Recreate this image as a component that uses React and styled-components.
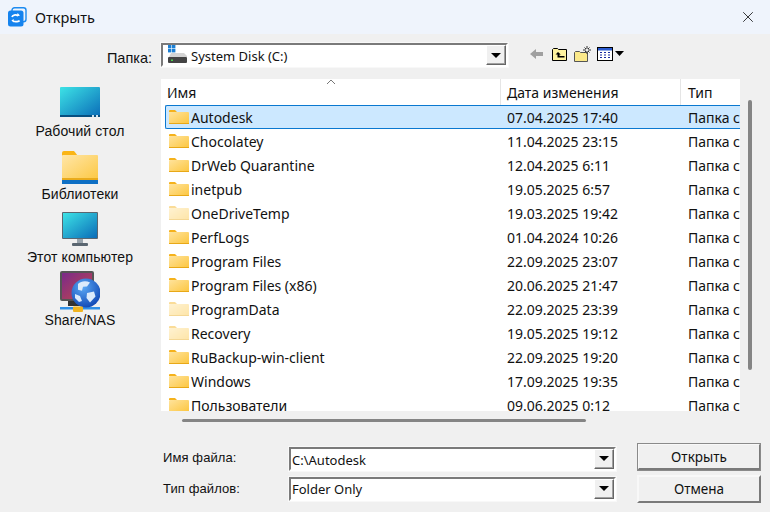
import React, { useId } from "react"
import styled, { createGlobalStyle } from "styled-components"
import { X } from "lucide-react"

const Global = createGlobalStyle`
  html, body { margin: 0; padding: 0; background: #f0f0f0; }
  * { box-sizing: border-box; }
`

const Win = styled.div`
  width: 770px;
  height: 512px;
  overflow: hidden;
  display: flex;
  flex-direction: column;
  background: #f0f0f0;
  color: #111;
  font-family: "Noto Sans", "Open Sans", sans-serif;
`

const TitleBar = styled.div`
  height: 34px;
  flex: none;
  display: flex;
  align-items: center;
  padding: 0 13px 0 8px;
  gap: 8px;
  background: #eff4fc;
  font-size: 14.5px;
`

const TitleText = styled.div`
  flex: 1;
`

const PathRow = styled.div`
  height: 45px;
  flex: none;
  display: flex;
  align-items: flex-start;
  padding-top: 9px;
`

const PathLabel = styled.div`
  width: 152px;
  height: 24px;
  text-align: right;
  font: 14.5px/30px "Liberation Sans", sans-serif;
  margin-right: 9px;
`

const Combo = styled.div`
  width: ${p => p.$w}px;
  height: 24px;
  display: flex;
  align-items: center;
  background: #fff;
  border: 2px solid;
  border-color: #7a7a7a #fff #fff #7a7a7a;
  font: 13px "Noto Sans", sans-serif;
  padding-left: ${p => p.$pad || 0}px;
  outline: 1px solid #f8f8f8;
`

const ComboText = styled.div`
  flex: 1;
  white-space: nowrap;
  margin-left: ${p => p.$left || 0}px;
  padding-top: ${p => p.$drop || 0}px;
`

const ComboBtn = styled.div`
  width: 20px;
  height: 20px;
  flex: none;
  display: flex;
  align-items: center;
  justify-content: center;
  background: #f0f0f0;
  border: 1px solid;
  border-color: #fff #666 #666 #fff;
  box-shadow: inset -1px -1px 0 #a0a0a0;
  &::after {
    content: "";
    border-left: 5px solid transparent;
    border-right: 5px solid transparent;
    border-top: 5px solid #000;
  }
`

const Tools = styled.div`
  display: flex;
  align-items: center;
  gap: 6px;
  margin-left: 22px;
  height: 22px;
`

const BackSvg = styled.svg`
  margin-right: 2px;
`

const Main = styled.div`
  height: 332px;
  flex: none;
  display: flex;
`

const Sidebar = styled.div`
  width: 161px;
  flex: none;
  display: flex;
  flex-direction: column;
`

const Place = styled.div`
  height: 63px;
  width: 160px;
  display: flex;
  flex-direction: column;
  align-items: center;
  justify-content: flex-end;
  padding-bottom: 3px;
`

const Caption = styled.div`
  margin-top: ${p => p.$gap}px;
  font: 14px/16px "Liberation Sans", sans-serif;
  letter-spacing: 0.1px;
`

const List = styled.div`
  width: 579px;
  flex: none;
  overflow: hidden;
  background: #fff;
  position: relative;
`

const Head = styled.div`
  display: grid;
  grid-template-columns: 340px 180px 59px;
  height: 26px;
`

const HeadCell = styled.div`
  padding: 2px 0 0 ${p => p.$pad}px;
  line-height: 24px;
  font-size: 14px;
  border-right: ${p => p.$last ? "none" : "1px solid #e5e5e5"};
  white-space: nowrap;
  overflow: hidden;
`

const SortMark = styled.svg`
  position: absolute;
  left: 165px;
  top: 0;
`

const Row = styled.div`
  display: grid;
  grid-template-columns: 335px 180px 60px;
  height: 24px;
  margin-left: 4px;
  font-size: 14px;
  line-height: 24px;
  border: 1px solid ${p => p.$sel ? "#0a78d0" : "transparent"};
  border-right: none;
  border-radius: 2px 0 0 2px;
  background: ${p => p.$sel ? "#cce8ff" : "transparent"};
`

const NameCell = styled.div`
  display: flex;
  align-items: flex-start;
  gap: 2px;
  padding-left: 3px;
  white-space: nowrap;
`

const DateCell = styled.div`
  padding-left: 6px;
  white-space: nowrap;
`

const TypeCell = styled.div`
  padding-left: 7px;
  white-space: nowrap;
  overflow: hidden;
`

const VScroll = styled.div`
  width: 4px;
  height: 270px;
  margin: 21px 0 0 8px;
  background: #858585;
  border-radius: 2px;
`

const HScroll = styled.div`
  height: 3px;
  width: 404px;
  flex: none;
  margin: 8px 0 0 182px;
  background: #858585;
  border-radius: 2px;
`

const Form = styled.div`
  flex: none;
  display: flex;
  padding: 21px 0 0 163px;
`

const Fields = styled.div`
  width: 474px;
  display: flex;
  flex-direction: column;
  padding-top: 4px;
  gap: 7px;
`

const FieldRow = styled.div`
  display: flex;
  align-items: center;
  height: 23px;
`

const FieldLabel = styled.div`
  width: 126px;
  font: 13px/18px "Liberation Sans", sans-serif;
  letter-spacing: 0.1px;
  padding-bottom: ${p => p.$up || 0}px;
`

const Buttons = styled.div`
  display: flex;
  flex-direction: column;
  gap: 4px;
`

const Btn = styled.div`
  width: 124px;
  height: 28px;
  display: flex;
  align-items: center;
  justify-content: center;
  font-size: 13.5px;
  background: #f0f0f0;
  border: 2px solid;
  border-color: #f8f8f8 #7a7a7a #7a7a7a #f8f8f8;
  border-bottom-width: ${p => p.$def ? 3 : 2}px;
  outline: ${p => p.$def ? "1px solid #8a8a8a" : "none"};
  outline-offset: -1px;
`

const CheckBox = styled.div`
  width: 14px;
  height: 14px;
  margin: 7px 0 0 126px;
  background: #fff;
  border: 2px solid;
  border-color: #7a7a7a #fff #fff #7a7a7a;
`

const FolderSvg = styled.svg`
  flex: none;
  margin-top: 3px;
  opacity: ${p => p.$faded ? 0.45 : 1};
`

const Folder = ({ faded }) => {
  const id = useId()
  return (
    <FolderSvg $faded={faded} width="20" height="16" viewBox="0 0 20 16">
      <defs>
        <linearGradient id={id} x1="0" y1="0" x2="1" y2="1">
          <stop offset="0" stopColor="#ffe39c" />
          <stop offset="1" stopColor="#fcc63f" />
        </linearGradient>
      </defs>
      <path d="M0 2a1 1 0 0 1 1-1h5l2 2h-8z" fill="#f5b21c" />
      <rect x="0" y="3" width="20" height="12" rx="1" fill={`url(#${id})`} />
      <rect x="0" y="14" width="20" height="1" fill="#e8a817" />
    </FolderSvg>
  )
}

const AppIcon = () => (
  <svg width="19" height="20" viewBox="0 0 19 20">
    <rect x="4" y="0.7" width="14" height="14" rx="2.5" fill="none" stroke="#1d8bf0" strokeWidth="1.4" />
    <rect x="0" y="3.5" width="15.5" height="16" rx="2.5" fill="#1583ee" />
    <path d="M4 10c.5-2 3.5-2.6 6-1.5M11.5 13.5c-.5 1-4 1.8-6.5.6" fill="none" stroke="#fff" strokeWidth="1.7" />
    <path d="M9.6 6l2.4 2.6-3.2 1zM5.6 12l-2.2 1.6 2.4 2z" fill="#fff" />
  </svg>
)

const DiskIcon = () => (
  <svg width="21" height="20" viewBox="0 0 21 20">
    <rect x="1" y="0" width="3.4" height="3.4" fill="#1b7fd4" />
    <rect x="5" y="0" width="3.4" height="3.4" fill="#1b7fd4" />
    <rect x="1" y="4" width="3.4" height="3.4" fill="#1b7fd4" />
    <rect x="5" y="4" width="3.4" height="3.4" fill="#1b7fd4" />
    <path d="M3 10l1-2h13l3 3v1H2z" fill="#d4d4d4" />
    <rect x="1" y="12" width="19" height="6" rx="1" fill="#444" />
    <rect x="4" y="14.5" width="2" height="1.5" fill="#4ed24e" />
  </svg>
)

const BackIcon = () => (
  <BackSvg width="14" height="12" viewBox="0 0 14 12">
    <path d="M0 6l6-5v3h7v4H6v3z" fill="#a0a0a0" />
  </BackSvg>
)

const UpIcon = () => (
  <svg width="16" height="14" viewBox="0 0 16 14">
    <path d="M.5 13.5v-11l1-1h4l1 1h8v11z" fill="#fff3a0" stroke="#000" />
    <path d="M6 5L3.5 7.5H5.5V10.5H12.5V9H7.5V7.5H8.8z" fill="#000" />
  </svg>
)

const NewFolderIcon = () => (
  <svg width="17" height="16" viewBox="0 0 17 16">
    <path d="M.5 15.5V6.5l1-1h4l1 1h7v9z" fill="#fbe98a" stroke="#555" />
    <path d="M13 0v3M13 5v3M9 4h3M14 4h3M10.5 1.5l1.5 1.5M15.5 1.5L14 3M10.5 6.5L12 5M15.5 6.5L14 5" stroke="#333" strokeWidth="1" />
  </svg>
)

const ViewIcon = () => (
  <svg width="27" height="14" viewBox="0 0 27 14">
    <rect x=".5" y=".5" width="15" height="13" fill="#fff" stroke="#000" />
    <rect x="1" y="1" width="14" height="2.5" fill="#2a5ad0" />
    <path d="M3 5.5h2M7 5.5h2M11 5.5h2M3 8h2M7 8h2M11 8h2M3 10.5h2M7 10.5h2M11 10.5h2" stroke="#1a2aa0" strokeWidth="1.2" />
    <path d="M18 4h9l-4.5 5z" fill="#000" />
  </svg>
)

const DesktopIcon = () => (
  <svg width="40" height="30" viewBox="0 0 40 30">
    <defs>
      <linearGradient id="deskFill" x1="0" y1="0" x2="1" y2="1">
        <stop offset="0" stopColor="#3de3e6" />
        <stop offset="1" stopColor="#0a6cb8" />
      </linearGradient>
    </defs>
    <rect width="40" height="30" rx="1" fill="url(#deskFill)" />
    <rect y="28" width="40" height="2" fill="#074f80" />
    <rect x="32" y="28" width="2" height="2" fill="#cfe4f2" />
    <rect x="36" y="28" width="2" height="2" fill="#cfe4f2" />
  </svg>
)

const LibraryIcon = () => (
  <svg width="36" height="33" viewBox="0 0 36 33">
    <defs>
      <linearGradient id="libFill" x1="0" y1="0" x2="1" y2="1">
        <stop offset="0" stopColor="#ffe6a8" />
        <stop offset="1" stopColor="#fcc843" />
      </linearGradient>
    </defs>
    <path d="M0 2a2 2 0 0 1 2-2h10l4 5H0z" fill="#fab516" />
    <rect y="4" width="36" height="25" rx="1" fill="url(#libFill)" />
    <rect y="27" width="36" height="2" fill="#e9ab1c" />
    <rect y="29" width="36" height="4" fill="#0e6fc4" />
  </svg>
)

const ComputerIcon = () => (
  <svg width="36" height="36" viewBox="0 0 36 36">
    <defs>
      <linearGradient id="pcFill" x1="0" y1="0" x2="1" y2="1">
        <stop offset="0" stopColor="#3de3e6" />
        <stop offset="1" stopColor="#0a6cb8" />
      </linearGradient>
    </defs>
    <rect width="36" height="27" rx="1" fill="#5a6670" />
    <rect x="1" y="1" width="34" height="25" fill="url(#pcFill)" />
    <rect x="15" y="27" width="6" height="5" fill="#9aa4ac" />
    <rect x="10" y="31" width="16" height="3" rx="1" fill="#5a6670" />
  </svg>
)

const ShareIcon = () => (
  <svg width="40" height="42" viewBox="0 0 40 42">
    <defs>
      <linearGradient id="screenFill" x1="0" y1="0" x2="1" y2="1">
        <stop offset="0" stopColor="#7a2a8a" />
        <stop offset="1" stopColor="#c2484a" />
      </linearGradient>
      <radialGradient id="globeFill" cx="0.4" cy="0.3" r="0.8">
        <stop offset="0" stopColor="#5aa8f5" />
        <stop offset="1" stopColor="#0a3fae" />
      </radialGradient>
    </defs>
    <rect x="0" y="0" width="34" height="30" rx="2" fill="#555" />
    <rect x="2" y="2" width="30" height="26" fill="url(#screenFill)" />
    <rect x="8" y="30" width="16" height="5" fill="#333" />
    <rect x="0" y="36" width="40" height="2.5" fill="#2f8fe6" />
    <circle cx="26" cy="22" r="14.5" fill="url(#globeFill)" />
    <path d="M18 13c3-3 8-3.5 12-1.5l-3 4-4 .2-1 4-4-1zM27 22l7-1.5 1.5 5-5.5 6-3.5-4.5zM15 23l5 2 2 5-3 1-4-4z" fill="#dbeafb" />
    <rect x="13" y="35.5" width="10" height="5.5" rx="1" fill="#f0b420" />
  </svg>
)

const places = [
  { label: "Рабочий стол", icon: <DesktopIcon />, gap: 6 },
  { label: "Библиотеки", icon: <LibraryIcon />, gap: 2 },
  { label: "Этот компьютер", icon: <ComputerIcon />, gap: 1 },
  { label: "Share/NAS", icon: <ShareIcon />, gap: -1 },
]

const files = [
  ["Autodesk", "07.04.2025 17:40"],
  ["Chocolatey", "11.04.2025 23:15"],
  ["DrWeb Quarantine", "12.04.2025 6:11"],
  ["inetpub", "19.05.2025 6:57"],
  ["OneDriveTemp", "19.03.2025 19:42", true],
  ["PerfLogs", "01.04.2024 10:26"],
  ["Program Files", "22.09.2025 23:07"],
  ["Program Files (x86)", "20.06.2025 21:47"],
  ["ProgramData", "22.09.2025 23:39", true],
  ["Recovery", "19.05.2025 19:12", true],
  ["RuBackup-win-client", "22.09.2025 19:20"],
  ["Windows", "17.09.2025 19:35"],
  ["Пользователи", "09.06.2025 0:12"],
]

const App = () => (
  <Win>
    <Global />
    <TitleBar>
      <AppIcon />
      <TitleText>Открыть</TitleText>
      <X size={18} strokeWidth={1.1} />
    </TitleBar>
    <PathRow>
      <PathLabel>Папка:</PathLabel>
      <Combo $w={347} $pad={4}>
        <DiskIcon />
        <ComboText $left={3} $drop={1}>System Disk (C:)</ComboText>
        <ComboBtn />
      </Combo>
      <Tools>
        <BackIcon />
        <UpIcon />
        <NewFolderIcon />
        <ViewIcon />
      </Tools>
    </PathRow>
    <Main>
      <Sidebar>
        {places.map(p => (
          <Place key={p.label}>
            {p.icon}
            <Caption $gap={p.gap}>{p.label}</Caption>
          </Place>
        ))}
      </Sidebar>
      <List>
        <SortMark width="10" height="6" viewBox="0 0 10 6">
          <path d="M1 5l4-4 4 4" fill="none" stroke="#777" />
        </SortMark>
        <Head>
          <HeadCell $pad={6}>Имя</HeadCell>
          <HeadCell $pad={6}>Дата изменения</HeadCell>
          <HeadCell $pad={7} $last>Тип</HeadCell>
        </Head>
        {files.map(([name, date, faded], i) => (
          <Row key={name} $sel={i === 0}>
            <NameCell>
              <Folder faded={faded} />
              {name}
            </NameCell>
            <DateCell>{date}</DateCell>
            <TypeCell>Папка с файлами</TypeCell>
          </Row>
        ))}
      </List>
      <VScroll />
    </Main>
    <HScroll />
    <Form>
      <Fields>
        <FieldRow>
          <FieldLabel $up={2}>Имя файла:</FieldLabel>
          <Combo $w={327} $pad={1}>
            <ComboText $drop={2}>C:\Autodesk</ComboText>
            <ComboBtn />
          </Combo>
        </FieldRow>
        <FieldRow>
          <FieldLabel>Тип файлов:</FieldLabel>
          <Combo $w={327} $pad={1}>
            <ComboText>Folder Only</ComboText>
            <ComboBtn />
          </Combo>
        </FieldRow>
        <CheckBox />
      </Fields>
      <Buttons>
        <Btn $def>Открыть</Btn>
        <Btn>Отмена</Btn>
      </Buttons>
    </Form>
  </Win>
)

export default App
